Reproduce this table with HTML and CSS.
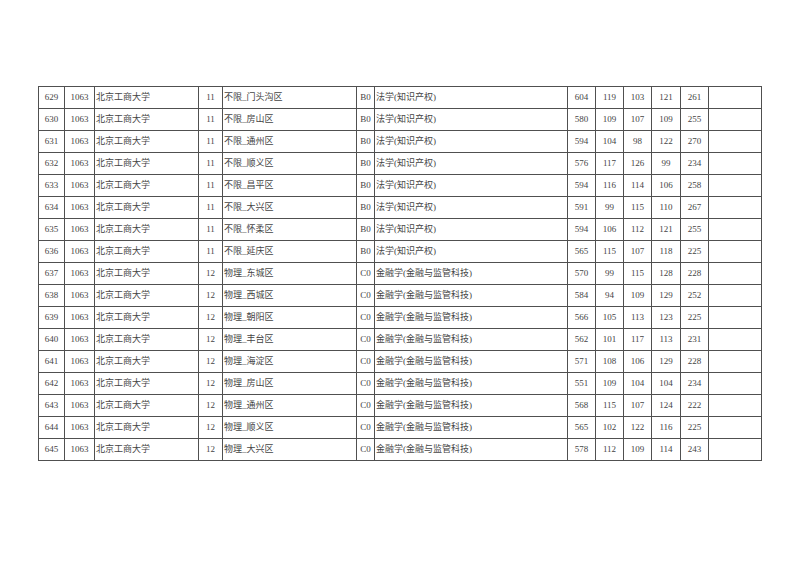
FILE: index.html
```html
<!DOCTYPE html>
<html lang="zh-CN">
<head>
<meta charset="utf-8">
<title>录取分数</title>
<link rel="stylesheet" href="styles.css">
</head>
<body>
<div class="page">
<table class="grid">
<colgroup>
<col style="width:26px"><col style="width:30px"><col style="width:104px"><col style="width:24px"><col style="width:134px"><col style="width:18px"><col style="width:193px"><col style="width:28px"><col style="width:28px"><col style="width:28px"><col style="width:29px"><col style="width:28px"><col style="width:53px">
</colgroup>
<tbody>
<tr><td class="c">629</td><td class="c">1063</td><td class="l">北京工商大学</td><td class="c">11</td><td class="l">不限_门头沟区</td><td class="c">B0</td><td class="l">法学(知识产权)</td><td class="c">604</td><td class="c">119</td><td class="c">103</td><td class="c">121</td><td class="c">261</td><td></td></tr>
<tr><td class="c">630</td><td class="c">1063</td><td class="l">北京工商大学</td><td class="c">11</td><td class="l">不限_房山区</td><td class="c">B0</td><td class="l">法学(知识产权)</td><td class="c">580</td><td class="c">109</td><td class="c">107</td><td class="c">109</td><td class="c">255</td><td></td></tr>
<tr><td class="c">631</td><td class="c">1063</td><td class="l">北京工商大学</td><td class="c">11</td><td class="l">不限_通州区</td><td class="c">B0</td><td class="l">法学(知识产权)</td><td class="c">594</td><td class="c">104</td><td class="c">98</td><td class="c">122</td><td class="c">270</td><td></td></tr>
<tr><td class="c">632</td><td class="c">1063</td><td class="l">北京工商大学</td><td class="c">11</td><td class="l">不限_顺义区</td><td class="c">B0</td><td class="l">法学(知识产权)</td><td class="c">576</td><td class="c">117</td><td class="c">126</td><td class="c">99</td><td class="c">234</td><td></td></tr>
<tr><td class="c">633</td><td class="c">1063</td><td class="l">北京工商大学</td><td class="c">11</td><td class="l">不限_昌平区</td><td class="c">B0</td><td class="l">法学(知识产权)</td><td class="c">594</td><td class="c">116</td><td class="c">114</td><td class="c">106</td><td class="c">258</td><td></td></tr>
<tr><td class="c">634</td><td class="c">1063</td><td class="l">北京工商大学</td><td class="c">11</td><td class="l">不限_大兴区</td><td class="c">B0</td><td class="l">法学(知识产权)</td><td class="c">591</td><td class="c">99</td><td class="c">115</td><td class="c">110</td><td class="c">267</td><td></td></tr>
<tr><td class="c">635</td><td class="c">1063</td><td class="l">北京工商大学</td><td class="c">11</td><td class="l">不限_怀柔区</td><td class="c">B0</td><td class="l">法学(知识产权)</td><td class="c">594</td><td class="c">106</td><td class="c">112</td><td class="c">121</td><td class="c">255</td><td></td></tr>
<tr><td class="c">636</td><td class="c">1063</td><td class="l">北京工商大学</td><td class="c">11</td><td class="l">不限_延庆区</td><td class="c">B0</td><td class="l">法学(知识产权)</td><td class="c">565</td><td class="c">115</td><td class="c">107</td><td class="c">118</td><td class="c">225</td><td></td></tr>
<tr><td class="c">637</td><td class="c">1063</td><td class="l">北京工商大学</td><td class="c">12</td><td class="l">物理_东城区</td><td class="c">C0</td><td class="l">金融学(金融与监管科技)</td><td class="c">570</td><td class="c">99</td><td class="c">115</td><td class="c">128</td><td class="c">228</td><td></td></tr>
<tr><td class="c">638</td><td class="c">1063</td><td class="l">北京工商大学</td><td class="c">12</td><td class="l">物理_西城区</td><td class="c">C0</td><td class="l">金融学(金融与监管科技)</td><td class="c">584</td><td class="c">94</td><td class="c">109</td><td class="c">129</td><td class="c">252</td><td></td></tr>
<tr><td class="c">639</td><td class="c">1063</td><td class="l">北京工商大学</td><td class="c">12</td><td class="l">物理_朝阳区</td><td class="c">C0</td><td class="l">金融学(金融与监管科技)</td><td class="c">566</td><td class="c">105</td><td class="c">113</td><td class="c">123</td><td class="c">225</td><td></td></tr>
<tr><td class="c">640</td><td class="c">1063</td><td class="l">北京工商大学</td><td class="c">12</td><td class="l">物理_丰台区</td><td class="c">C0</td><td class="l">金融学(金融与监管科技)</td><td class="c">562</td><td class="c">101</td><td class="c">117</td><td class="c">113</td><td class="c">231</td><td></td></tr>
<tr><td class="c">641</td><td class="c">1063</td><td class="l">北京工商大学</td><td class="c">12</td><td class="l">物理_海淀区</td><td class="c">C0</td><td class="l">金融学(金融与监管科技)</td><td class="c">571</td><td class="c">108</td><td class="c">106</td><td class="c">129</td><td class="c">228</td><td></td></tr>
<tr><td class="c">642</td><td class="c">1063</td><td class="l">北京工商大学</td><td class="c">12</td><td class="l">物理_房山区</td><td class="c">C0</td><td class="l">金融学(金融与监管科技)</td><td class="c">551</td><td class="c">109</td><td class="c">104</td><td class="c">104</td><td class="c">234</td><td></td></tr>
<tr><td class="c">643</td><td class="c">1063</td><td class="l">北京工商大学</td><td class="c">12</td><td class="l">物理_通州区</td><td class="c">C0</td><td class="l">金融学(金融与监管科技)</td><td class="c">568</td><td class="c">115</td><td class="c">107</td><td class="c">124</td><td class="c">222</td><td></td></tr>
<tr><td class="c">644</td><td class="c">1063</td><td class="l">北京工商大学</td><td class="c">12</td><td class="l">物理_顺义区</td><td class="c">C0</td><td class="l">金融学(金融与监管科技)</td><td class="c">565</td><td class="c">102</td><td class="c">122</td><td class="c">116</td><td class="c">225</td><td></td></tr>
<tr><td class="c">645</td><td class="c">1063</td><td class="l">北京工商大学</td><td class="c">12</td><td class="l">物理_大兴区</td><td class="c">C0</td><td class="l">金融学(金融与监管科技)</td><td class="c">578</td><td class="c">112</td><td class="c">109</td><td class="c">114</td><td class="c">243</td><td></td></tr>
</tbody>
</table>
</div>
</body>
</html>
```

FILE: styles.css
```css
html, body {
  margin: 0;
  padding: 0;
  background: #ffffff;
}

.page {
  width: 800px;
  height: 566px;
  box-sizing: border-box;
  padding: 86px 0 0 38px;
  font-family: "Liberation Serif", "Noto Sans CJK SC", serif;
  font-size: 9px;
  color: #444444;
}

.grid {
  border-collapse: collapse;
  table-layout: fixed;
  width: 724px;
}

.grid td {
  border: 1px solid #505050;
  height: 21px;
  padding: 0;
  line-height: 21px;
  white-space: nowrap;
  overflow: hidden;
  box-sizing: border-box;
}

.grid td.c {
  text-align: center;
}

.grid td.l {
  text-align: left;
  padding-left: 1px;
}
```
